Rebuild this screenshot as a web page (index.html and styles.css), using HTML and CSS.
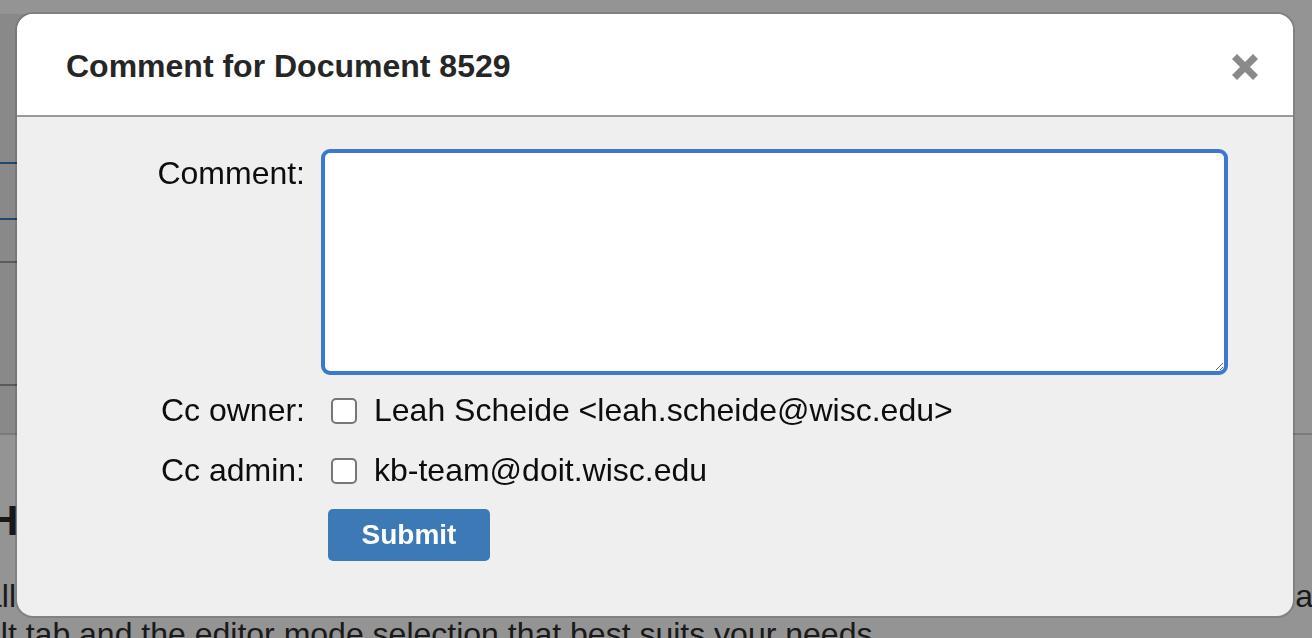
FILE: index.html
```html
<!DOCTYPE html>
<html lang="en">
<head>
<meta charset="utf-8">
<title>Comment for Document 8529</title>
<link rel="stylesheet" href="styles.css">
</head>
<body>
<div class="page">
  <div class="top">
    <div class="side">
      <div class="side-head"></div>
      <div class="side-tab"></div>
      <div class="side-item"></div>
      <div class="side-item2"></div>
    </div>
    <div class="main-top"></div>
  </div>
  <h2 class="bg-heading">How to use the editor</h2>
  <div class="bg-line bg-line1"><span class="cut-left">all of the options below</span><span class="cut-right">as</span></div>
  <div class="bg-line bg-line2">ult tab and the editor mode selection that best suits your needs.</div>
</div>

<div class="backdrop"></div>

<div class="modal" role="dialog" aria-labelledby="modal-title">
  <div class="modal-header">
    <h1 class="modal-title" id="modal-title">Comment for Document 8529</h1>
    <button class="close" type="button" aria-label="Close">
      <svg viewBox="0 0 30 30" width="30" height="30" aria-hidden="true">
        <line x1="4.5" y1="4.5" x2="25.5" y2="25.5" stroke="#8a8a8a" stroke-width="7"/>
        <line x1="25.5" y1="4.5" x2="4.5" y2="25.5" stroke="#8a8a8a" stroke-width="7"/>
      </svg>
    </button>
  </div>
  <form class="modal-body">
    <div class="row row-comment">
      <label class="lbl lbl-top" for="comment">Comment:</label>
      <textarea id="comment" class="comment-box"></textarea>
    </div>
    <div class="row row-cc row-owner">
      <span class="lbl">Cc owner:</span>
      <label class="cc"><input type="checkbox" class="check"><span>Leah Scheide &lt;leah.scheide@wisc.edu&gt;</span></label>
    </div>
    <div class="row row-cc row-admin">
      <span class="lbl">Cc admin:</span>
      <label class="cc"><input type="checkbox" class="check"><span>kb-team@doit.wisc.edu</span></label>
    </div>
    <div class="row row-submit">
      <span class="lbl"></span>
      <button type="button" class="submit">Submit</button>
    </div>
  </form>
</div>
</body>
</html>
```

FILE: styles.css
```css
html, body {
  margin: 0;
  padding: 0;
}

body {
  width: 1312px;
  height: 638px;
  overflow: hidden;
  background: #ffffff;
  font-family: "Liberation Sans", Arial, sans-serif;
  color: #2e2e2e;
}

/* ---------- underlying page ---------- */
.page {
  width: 1312px;
  overflow: hidden;
}

.top {
  display: flex;
  height: 433px;
  border-bottom: 2px solid #d4d4d4;
}

.side {
  width: 220px;
  margin-top: 14px;
  background: #ededed;
  display: flex;
  flex-direction: column;
}

.side-head {
  height: 148px;
}

.side-tab {
  height: 54px;
  border-top: 2px solid #417abe;
  border-bottom: 2px solid #417abe;
  background: #ededed;
}

.side-item {
  height: 41px;
  border-bottom: 2px solid #9f9f9f;
}

.side-item2 {
  height: 121px;
  border-bottom: 2px solid #9c9c9c;
}

.main-top {
  flex: 1;
  background: #ffffff;
}

.bg-heading {
  margin: 62px 0 0 -12px;
  font-size: 42px;
  line-height: 48px;
  font-weight: bold;
  color: #2a2a2a;
  white-space: nowrap;
}

.bg-line {
  font-size: 32px;
  line-height: 38px;
  white-space: nowrap;
  color: #2e2e2e;
}

.bg-line1 {
  margin-top: 32px;
  display: flex;
  justify-content: space-between;
  overflow: hidden;
}

.cut-left {
  margin-left: -16px;
}

.cut-right {
  margin-right: -17px;
}

.bg-line2 {
  margin-left: -17px;
}

/* ---------- overlay & modal ---------- */
.backdrop {
  position: fixed;
  inset: 0;
  background: rgba(0, 0, 0, 0.42);
}

.modal {
  position: fixed;
  left: 15px;
  top: 12px;
  width: 1280px;
  height: 606px;
  box-sizing: border-box;
  border: 2px solid rgba(0, 0, 0, 0.13);
  border-radius: 18px;
  background: #efefef;
  background-clip: padding-box;
  overflow: hidden;
  display: flex;
  flex-direction: column;
}

.modal-header {
  display: flex;
  align-items: center;
  justify-content: space-between;
  background: #ffffff;
  padding: 34px 33px 30px 49px;
  border-bottom: 2px solid #9a9a9a;
}

.modal-title {
  margin: 0;
  font-size: 32px;
  line-height: 37px;
  font-weight: bold;
  color: #262626;
}

.close {
  border: 0;
  background: none;
  padding: 0;
  width: 30px;
  height: 30px;
  display: block;
  cursor: pointer;
}

.close svg {
  display: block;
}

.modal-body {
  margin: 0;
  padding: 32px 65px 0 128px;
  display: flex;
  flex-direction: column;
  font-size: 32px;
  color: #0d0d0d;
}

.row {
  display: flex;
  gap: 16px;
}

.lbl {
  flex: 0 0 160px;
  text-align: right;
  line-height: 37px;
  white-space: nowrap;
}

.lbl-top {
  margin-top: 6px;
}

.comment-box {
  flex: 1;
  box-sizing: border-box;
  height: 226px;
  margin: 0;
  border: 4px solid #3b78cf;
  border-radius: 9px;
  background: #ffffff;
  outline: none;
  font-family: "Liberation Sans", Arial, sans-serif;
  font-size: 28px;
  padding: 6px;
}

.row-cc {
  align-items: center;
}

.row-owner {
  margin-top: 17px;
}

.row-admin {
  margin-top: 23px;
}

.cc {
  display: flex;
  align-items: center;
  line-height: 37px;
  white-space: nowrap;
}

.check {
  appearance: none;
  -webkit-appearance: none;
  width: 26px;
  height: 26px;
  margin: 0 17px 0 10px;
  box-sizing: border-box;
  border: 2px solid #777777;
  border-radius: 5px;
  background: #ffffff;
}

.row-submit {
  margin-top: 20px;
}

.submit {
  margin-left: 7px;
  width: 162px;
  height: 52px;
  border: 0;
  border-radius: 5px;
  background: #3d79b5;
  color: #ffffff;
  font-family: "Liberation Sans", Arial, sans-serif;
  font-size: 28px;
  font-weight: bold;
  padding: 0;
  cursor: pointer;
}
```
